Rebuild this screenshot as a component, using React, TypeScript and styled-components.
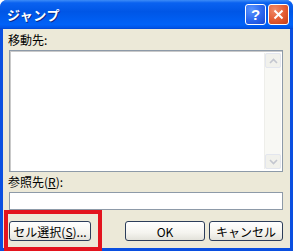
import styled, { createGlobalStyle } from "styled-components";

const GlobalStyle = createGlobalStyle`
  html, body {
    margin: 0;
    padding: 0;
    background: #ffffff;
  }
  body {
    font-family: "Noto Sans CJK JP", "MS UI Gothic", sans-serif;
  }
`;

const Window = styled.div`
  position: relative;
  width: 293px;
  height: 251px;
  box-sizing: border-box;
  display: flex;
  flex-direction: column;
  background: #0a4fe0;
  border-radius: 7px 7px 0 0;
  overflow: hidden;
`;

const TitleBar = styled.div`
  height: 29px;
  flex: none;
  display: flex;
  align-items: center;
  padding: 0 4px 0 7px;
  background: linear-gradient(
    180deg,
    #3d8cf7 0%,
    #0a62f0 10%,
    #0056e6 40%,
    #0062f8 85%,
    #0055e8 95%,
    #0046d2 100%
  );
`;

const Title = styled.span`
  flex: 1;
  color: #ffffff;
  font-size: 13px;
  font-weight: 700;
  letter-spacing: 0.5px;
  text-shadow: 1px 1px 0 #0a2a88;
`;

const CaptionButton = styled.div<{ $kind: "help" | "close" }>`
  width: 21px;
  height: 21px;
  box-sizing: border-box;
  margin-left: 2px;
  border: 1px solid #ffffff;
  border-radius: 3px;
  display: flex;
  align-items: center;
  justify-content: center;
  color: #ffffff;
  font-family: "Liberation Sans", Arial, sans-serif;
  font-weight: 700;
  font-size: 15px;
  background: ${(p) =>
    p.$kind === "help"
      ? "radial-gradient(circle at 30% 25%, #5b95ff 0%, #2a66ee 55%, #1846d0 100%)"
      : "radial-gradient(circle at 30% 25%, #f08a6a 0%, #e35a30 55%, #c43d18 100%)"};
`;

const Body = styled.div`
  flex: 1;
  margin: 0 3px 3px 3px;
  background: #ece9d8;
  display: flex;
  flex-direction: column;
  padding: 3px 7px 0 6px;
`;

const Label = styled.div<{ $top?: number }>`
  font-size: 12px;
  line-height: 15px;
  color: #000000;
  margin-left: -1px;
  margin-top: ${(p) => p.$top ?? 0}px;
  u {
    text-decoration: underline;
    text-underline-offset: 1px;
  }
`;

const ListBox = styled.div`
  margin-top: 3px;
  height: 122px;
  box-sizing: border-box;
  border: 1px solid #8d9aa8;
  box-shadow: inset 1px 1px 0 #c9c9c9;
  background: #ffffff;
  display: flex;
  justify-content: flex-end;
  padding: 2px 1px 2px 0;
`;

const ScrollBar = styled.div`
  width: 16px;
  display: flex;
  flex-direction: column;
  justify-content: space-between;
  background: #f8f8f4;
  border-left: 1px solid #eeeeea;
`;

const ArrowButton = styled.div`
  height: 15px;
  box-sizing: border-box;
  border: 1px solid #e3e6ee;
  border-radius: 2px;
  background: #f1f1ec;
  display: flex;
  align-items: center;
  justify-content: center;
`;

const TextInput = styled.div`
  margin-top: 3px;
  height: 18px;
  box-sizing: border-box;
  border: 1px solid #8d9aa8;
  background: #ffffff;
`;

const ButtonRow = styled.div`
  margin-top: 11px;
  display: flex;
  align-items: center;
`;

const Button = styled.div<{ $width: number; $gap?: number }>`
  width: ${(p) => p.$width}px;
  height: 20px;
  box-sizing: border-box;
  margin-left: ${(p) => p.$gap ?? 0}px;
  border: 1px solid #2c3d5a;
  border-radius: 3px;
  background: linear-gradient(180deg, #ffffff 0%, #f5f4ef 60%, #e3e2da 100%);
  display: flex;
  align-items: center;
  justify-content: center;
  font-size: 12px;
  color: #000000;
  u {
    text-decoration: underline;
    text-underline-offset: 1px;
  }
`;

const Highlight = styled.div`
  position: absolute;
  left: 4px;
  top: 210px;
  width: 98px;
  height: 41px;
  box-sizing: border-box;
  border: 4px solid #e3141e;
  pointer-events: none;
`;

const Chevron = ({ up }: { up?: boolean }) => (
  <svg width="9" height="6" viewBox="0 0 9 6">
    <path
      d={up ? "M1 5 L4.5 1.5 L8 5" : "M1 1 L4.5 4.5 L8 1"}
      fill="none"
      stroke="#c3c6cf"
      strokeWidth="1.6"
    />
  </svg>
);

export default function App() {
  return (
    <>
      <GlobalStyle />
      <Window>
        <TitleBar>
          <Title>ジャンプ</Title>
          <CaptionButton $kind="help">?</CaptionButton>
          <CaptionButton $kind="close">
            <svg width="11" height="11" viewBox="0 0 11 11">
              <path d="M1.5 1.5 L9.5 9.5 M9.5 1.5 L1.5 9.5" stroke="#ffffff" strokeWidth="2" />
            </svg>
          </CaptionButton>
        </TitleBar>
        <Body>
          <Label>移動先:</Label>
          <ListBox>
            <ScrollBar>
              <ArrowButton>
                <Chevron up />
              </ArrowButton>
              <ArrowButton>
                <Chevron />
              </ArrowButton>
            </ScrollBar>
          </ListBox>
          <Label $top={2}>
            参照先(<u>R</u>):
          </Label>
          <TextInput />
          <ButtonRow>
            <Button $width={82}>
              セル選択(<u>S</u>)...
            </Button>
            <Button $width={80} $gap={34}>
              OK
            </Button>
            <Button $width={74} $gap={4}>
              キャンセル
            </Button>
          </ButtonRow>
        </Body>
        <Highlight />
      </Window>
    </>
  );
}
